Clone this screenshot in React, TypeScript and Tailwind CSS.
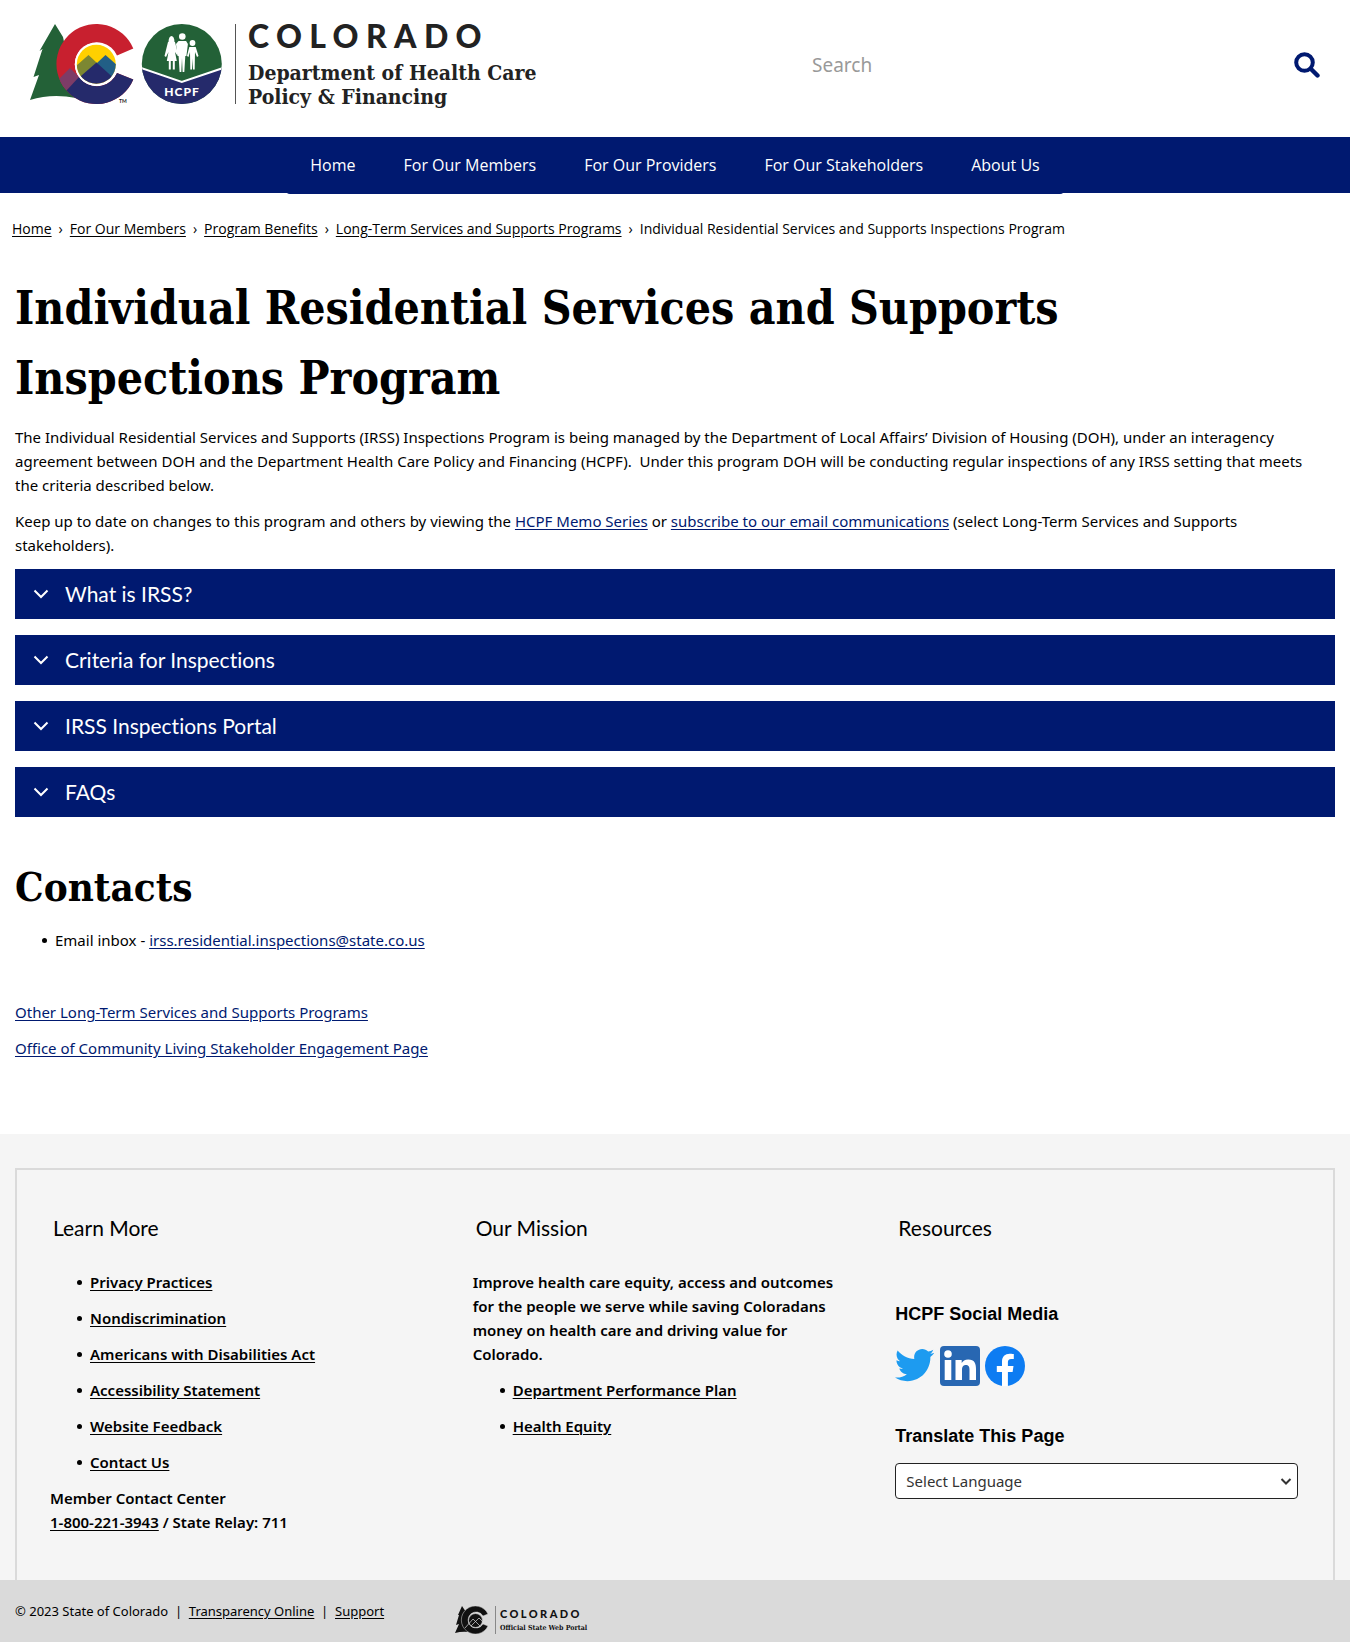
import React from "react";

const BODY = "font-['Noto_Sans','Open_Sans',sans-serif]";
const NAV = "font-['Open_Sans','Noto_Sans',sans-serif]";
const SANS = "font-['Lato',sans-serif] [font-variant-ligatures:none]";
const SLAB = "font-['DejaVu_Serif_Condensed','DejaVu_Serif',serif]";

function AgencyMark() {
  return (
    <svg className="h-[83px] w-[200px] shrink-0" viewBox="0 0 200 83" aria-hidden="true">
      <defs>
        <clipPath id="c-shape">
          <path d="M103.300 24.500 A40 40 0 1 0 103.300 55.500 L87 49 A22 22 0 1 1 87 31.500 Z" />
        </clipPath>
        <clipPath id="sun">
          <circle cx="66.300" cy="40.300" r="19.500" />
        </clipPath>
        <clipPath id="badge">
          <circle cx="151.800" cy="40" r="40" />
        </clipPath>
      </defs>
      <path d="M25 0 L33 13 L46 74 Q22 69 0 76 L9 51 L3.500 53 L12.500 25 L9.500 27 Z" fill="#236137" />
      <path d="M103.300 24.500 A40 40 0 1 0 103.300 55.500 L87 49 A22 22 0 1 1 87 31.500 Z" fill="#c8202f" />
      <g clipPath="url(#c-shape)">
        <path d="M28 56 L40 44 L50 54 L36 67 Z" fill="#7d3c67" />
        <path d="M36 67 L50 52 L86 46 L110 50 L110 84 L50 84 Z" fill="#252a6b" />
        <path d="M36 66 Q39 72 46 77 L40 80 L30 66 Z" fill="#1d3f3f" />
      </g>
      <circle cx="66.300" cy="40.300" r="21.500" fill="#fff" />
      <circle cx="66.300" cy="40.300" r="19.500" fill="#ffd000" />
      <g clipPath="url(#sun)">
        <path d="M45 43 L58.500 31 L67 39 L60 56 L45 60 Z" fill="#7c8732" />
        <path d="M67 39 L75.500 31 L88 42 L88 60 L70 52 Z" fill="#225f86" />
        <path d="M44 58 L66.500 38.500 L90 60 L84 64 L48 64 Z" fill="#252a6b" />
      </g>
      <text x="89" y="79" fontSize="5" fontWeight="700" fill="#222" fontFamily="Lato">TM</text>
      <g clipPath="url(#badge)">
        <rect x="111" width="82" height="81" fill="#236137" />
        <path d="M111 44 L151.800 58 L193 44 V82 H111 Z" fill="#252a6b" />
        <path d="M111 44 L151.800 58 L193 44" fill="none" stroke="#fff" strokeWidth="2" />
      </g>
      <g fill="#fff">
        <path d="M138.500 18 C138.500 10 144.500 10 144.500 18 Z" />
        <circle cx="152.300" cy="12.500" r="3.300" />
        <circle cx="162.500" cy="19" r="2.900" />
        <path d="M138 18 h7 l3 12 l-1 1 l-2 -3 l1.800 9 h-2 v8.500 h-2 v-8.500 h-2 v8.500 h-2 v-8.500 h-2 l1.700 -9 l-2.500 5 l-1.500 -1 z" />
        <path d="M148.500 17 h7.600 l1.800 3 l-1.500 12 h-1.100 l-1 16 h-1.700 l-.6 -14 l-.7 14 h-1.700 l-1 -16 h-1.100 l-1.500 -12 z" />
        <path d="M159.300 23 h6.400 l2.800 9 l-1.500 1 l-2 -5 l-.3 17.500 h-1.700 l-.5 -11 l-.5 11 h-1.700 l-.3 -17.500 l-1.500 5 l-1.500 -1 z" />
      </g>
      <text x="152" y="72" fontSize="12" fontWeight="900" fill="#fff" textAnchor="middle" fontFamily="Lato" letterSpacing="1">HCPF</text>
    </svg>
  );
}

function PortalMark() {
  return (
    <svg className="h-[29px] w-[34px] shrink-0" viewBox="0 0 34 29" aria-hidden="true">
      <path d="M7 0 L11 6 L14 26 Q7 25 0 27 L4 18 L1 19 L4 9 L3 9 Z" fill="#111" />
      <path d="M33 8 A14 14 0 1 0 33 20 L28 18 A8 8 0 1 1 28 10 Z" fill="#111" stroke="#dadada" strokeWidth="0.500" />
      <circle cx="20.500" cy="14.500" r="7" fill="#111" />
      <circle cx="20.500" cy="14.500" r="7" fill="none" stroke="#dadada" strokeWidth="0.700" />
      <path d="M10 22 L18 13 L25 20 M16 20 L24 12 L28 16" fill="none" stroke="#dadada" strokeWidth="0.700" />
    </svg>
  );
}

const nav = ["Home", "For Our Members", "For Our Providers", "For Our Stakeholders", "About Us"];
const crumbs = ["Home", "For Our Members", "Program Benefits", "Long-Term Services and Supports Programs"];
const panels = ["What is IRSS?", "Criteria for Inspections", "IRSS Inspections Portal", "FAQs"];
const learn = [
  "Privacy Practices",
  "Nondiscrimination",
  "Americans with Disabilities Act",
  "Accessibility Statement",
  "Website Feedback",
  "Contact Us",
];
const mission = ["Department Performance Plan", "Health Equity"];

function A({ children }: { children: React.ReactNode }) {
  return (
    <a href="#" className="text-[#001970] underline underline-offset-2">
      {children}
    </a>
  );
}

function Bullet({ children }: { children: React.ReactNode }) {
  return (
    <li className="flex items-center gap-2 before:size-[5px] before:rounded-full before:bg-current">
      <span>{children}</span>
    </li>
  );
}

function LinkList({ items }: { items: string[] }) {
  return (
    <ul className="space-y-3 pl-[27px]">
      {items.map((t) => (
        <Bullet key={t}>
          <a href="#" className="underline underline-offset-2">{t}</a>
        </Bullet>
      ))}
    </ul>
  );
}

function FooterHeading({ children }: { children: React.ReactNode }) {
  return <h2 className={`${SANS} px-[3px] text-[21px] leading-6 font-normal`}>{children}</h2>;
}

export default function App() {
  return (
    <div className={`${BODY} bg-white text-[15px] leading-6 text-black`}>
      <header className="flex h-[137px] justify-between pt-6 pr-[30px] pl-[30px]">
        <a href="#" className="flex" aria-label="Colorado Department of Health Care Policy and Financing">
          <AgencyMark />
          <span className="ml-[5px] h-20 w-px bg-[#555]" />
          <span className="ml-3 flex flex-col text-[#222]">
            <span className={`${SANS} text-[32px] leading-6 font-black tracking-[0.23em]`}>COLORADO</span>
            <span className={`${SLAB} mt-[13px] text-[21px] leading-6 font-bold`}>
              Department of Health Care
              <br />
              Policy &amp; Financing
            </span>
          </span>
        </a>
        <form className="flex h-[82px] w-[508px] items-center" onSubmit={(e) => e.preventDefault()}>
          <input
            aria-label="Search"
            placeholder="Search"
            className="min-w-0 flex-1 text-[19px] outline-none placeholder:text-[#999]"
          />
          <button type="submit" aria-label="Submit search">
            <svg className="size-[26px]" viewBox="0 0 26 26" fill="none" stroke="#001970">
              <circle cx="10.500" cy="10.500" r="8.300" strokeWidth="4" />
              <path d="M17 17 L23.500 23.500" strokeWidth="4.400" strokeLinecap="round" />
            </svg>
          </button>
        </form>
      </header>

      <nav className={`${NAV} flex h-14 justify-center bg-[#001970] text-base text-white`}>
        <ul className="-mb-px flex items-center gap-12 rounded-b bg-[#001970] px-6 pb-0.5">
          {nav.map((t) => (
            <li key={t}>
              <a href="#">{t}</a>
            </li>
          ))}
        </ul>
      </nav>

      <nav aria-label="Breadcrumb" className={`${NAV} px-3 pt-6 text-sm leading-6`}>
        <ol className="flex flex-wrap">
          {crumbs.map((t) => (
            <li key={t}>
              <a href="#" className="underline underline-offset-2">{t}</a>
              <span className="px-[7px]">›</span>
            </li>
          ))}
          <li>Individual Residential Services and Supports Inspections Program</li>
        </ol>
      </nav>

      <main className="px-[15px] pt-8">
        <h1 className={`${SLAB} text-[46px] leading-[70px] font-bold`}>
          Individual Residential Services and Supports Inspections Program
        </h1>
        <p className="mt-3 pr-4">
          The Individual Residential Services and Supports (IRSS) Inspections Program is being managed by the Department of
          Local Affairs’ Division of Housing (DOH), under an interagency agreement between DOH and the Department Health
          Care Policy and Financing (HCPF).&nbsp; Under this program DOH will be conducting regular inspections of any IRSS
          setting that meets the criteria described below.
        </p>
        <p className="mt-3 pr-4">
          Keep up to date on changes to this program and others by viewing the <A>HCPF Memo Series</A> or{" "}
          <A>subscribe to our email communications</A> (select Long-Term Services and Supports stakeholders).
        </p>
        <div className="mt-3 flex flex-col gap-4">
          {panels.map((t) => (
            <button
              key={t}
              type="button"
              aria-expanded="false"
              className={`${SANS} flex h-[50px] items-center gap-4 bg-[#001970] pl-[18px] text-left text-[21px] text-white`}
            >
              <svg className="h-4 w-4" viewBox="0 0 16 16" fill="none" stroke="#fff" strokeWidth="2">
                <path d="M1.500 4.500 L8 11 L14.500 4.500" />
              </svg>
              {t}
            </button>
          ))}
        </div>
        <h2 className={`${SLAB} mt-10 text-[40px] leading-[60px] font-bold`}>Contacts</h2>
        <ul className="mt-[11px] pl-[27px]">
          <Bullet>
            Email inbox - <A>irss.residential.inspections@state.co.us</A>
          </Bullet>
        </ul>
        <p className="mt-12">
          <A>Other Long-Term Services and Supports Programs</A>
        </p>
        <p className="mt-3">
          <A>Office of Community Living Stakeholder Engagement Page</A>
        </p>
      </main>

      <footer className="mt-[74px]">
        <div className="bg-[#f5f5f5] px-[15px] pt-[34px]">
          <div className="grid grid-cols-3 border-2 border-b-0 border-[#dadada] pt-[46px] pr-[25px] pb-[46px] pl-[23px] font-semibold">
            <section className="px-2.5">
              <FooterHeading>Learn More</FooterHeading>
              <div className="mt-[30px]">
                <LinkList items={learn} />
                <p className="mt-3">
                  Member Contact Center
                  <br />
                  <a href="#" className="underline underline-offset-2">1-800-221-3943</a> / State Relay: 711
                </p>
              </div>
            </section>
            <section className="px-2.5">
              <FooterHeading>Our Mission</FooterHeading>
              <p className="mt-[30px] mb-3 pr-7">
                Improve health care equity, access and outcomes for the people we serve while saving Coloradans money on
                health care and driving value for Colorado.
              </p>
              <LinkList items={mission} />
            </section>
            <section className="px-2.5">
              <FooterHeading>Resources</FooterHeading>
              <h3 className="mt-[62px] font-['Liberation_Sans',sans-serif] text-lg leading-6 font-bold">HCPF Social Media</h3>
              <div className="mt-5 flex gap-[5px]">
                <a href="#" aria-label="Twitter">
                  <svg className="size-10" viewBox="1 1 23 23" fill="#1d9bf0">
                    <path d="M23.643 4.937c-.835.37-1.732.62-2.675.733.962-.576 1.700-1.490 2.048-2.578-.9.534-1.897.922-2.958 1.130-.85-.904-2.060-1.470-3.400-1.470-2.572 0-4.658 2.086-4.658 4.660 0 .364.042.718.120 1.060-3.873-.195-7.304-2.050-9.602-4.868-.4.690-.63 1.490-.63 2.342 0 1.616.823 3.043 2.072 3.878-.764-.025-1.482-.234-2.110-.583v.060c0 2.257 1.605 4.140 3.737 4.568-.392.106-.803.162-1.227.162-.3 0-.593-.028-.877-.082.593 1.850 2.313 3.198 4.352 3.234-1.595 1.250-3.604 1.995-5.786 1.995-.376 0-.747-.022-1.112-.065 2.062 1.323 4.510 2.093 7.140 2.093 8.570 0 13.255-7.098 13.255-13.254 0-.2-.005-.402-.014-.602.910-.658 1.700-1.477 2.323-2.410z" />
                  </svg>
                </a>
                <a href="#" aria-label="LinkedIn">
                  <svg className="size-10" viewBox="0 0 40 40">
                    <rect width="40" height="40" rx="4" fill="#2867b2" />
                    <g fill="#fff">
                      <circle cx="8" cy="8" r="3.800" />
                      <path d="M4.700 14h6.600v20H4.700zM15.500 14h6.200v3c1-1.900 3.300-3.500 6.500-3.500 6.500 0 7.800 4.200 7.800 9.500v11h-6.500v-10c0-2.600-.5-5-3.500-5-3.200 0-4 2.300-4 5v10h-6.500z" />
                    </g>
                  </svg>
                </a>
                <a href="#" aria-label="Facebook">
                  <svg className="size-10" viewBox="0 0 40 40">
                    <circle cx="20" cy="20" r="20" fill="#0d7cf2" />
                    <path d="M17 40V26h-5.200v-6H17v-4.300c0-5.100 3-7.900 7.700-7.900 2.200 0 4.100.3 4.100.3v5h-2.600c-2.500 0-3.300 1.600-3.300 3.200V20h5.600l-.9 6h-4.700v14z" fill="#fff" />
                  </svg>
                </a>
              </div>
              <label htmlFor="language" className="mt-[38px] block font-['Liberation_Sans',sans-serif] text-lg leading-6 font-bold">
                Translate This Page
              </label>
              <div className="relative mt-[15px]">
                <select
                  id="language"
                  className="h-9 w-full appearance-none rounded border border-[#222] bg-white px-2.5 font-normal text-[#333]"
                >
                  <option>Select Language</option>
                </select>
                <svg className="pointer-events-none absolute top-3 right-1.5 size-3" viewBox="0 0 12 12" fill="none" stroke="#333" strokeWidth="2">
                  <path d="M1.500 4 L6 8.500 L10.500 4" />
                </svg>
              </div>
            </section>
          </div>
        </div>
        <div className="flex h-[62px] bg-[#dadada] px-[15px] pt-[19px] text-[13px]">
          <p className="w-[440px]">
            © 2023 State of Colorado &nbsp;|&nbsp; <a href="#" className="underline underline-offset-2">Transparency Online</a>
            &nbsp; |&nbsp; <a href="#" className="underline underline-offset-2">Support</a>
          </p>
          <a href="#" className="mt-[7px] flex" aria-label="Colorado Official State Web Portal">
            <PortalMark />
            <span className="ml-1.5 h-7 w-px bg-[#888]" />
            <span className="ml-1 flex flex-col text-[#111]">
              <span className={`${SANS} text-[11px] leading-4 font-black tracking-[0.22em]`}>COLORADO</span>
              <span className={`${SLAB} text-[7px] leading-3 font-bold`}>Official State Web Portal</span>
            </span>
          </a>
        </div>
      </footer>
    </div>
  );
}
